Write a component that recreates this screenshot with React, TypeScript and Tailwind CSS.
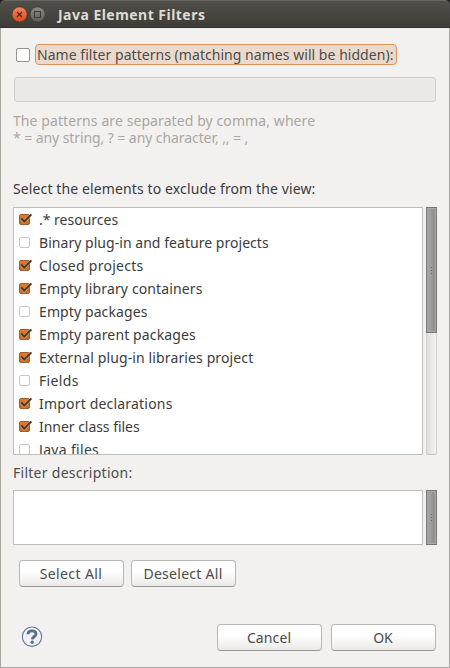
import type { ReactNode } from "react";

type Filter = { name: string; checked: boolean; tracking: string };

const filters: Filter[] = [
  { name: ".* resources", checked: true, tracking: "tracking-[0px]" },
  { name: "Binary plug-in and feature projects", checked: false, tracking: "tracking-[0.04px]" },
  { name: "Closed projects", checked: true, tracking: "tracking-[0.28px]" },
  { name: "Empty library containers", checked: true, tracking: "tracking-[0.13px]" },
  { name: "Empty packages", checked: false, tracking: "tracking-[0.1px]" },
  { name: "Empty parent packages", checked: true, tracking: "tracking-[0.12px]" },
  { name: "External plug-in libraries project", checked: true, tracking: "tracking-[0.12px]" },
  { name: "Fields", checked: false, tracking: "tracking-[0.35px]" },
  { name: "Import declarations", checked: true, tracking: "tracking-[0.19px]" },
  { name: "Inner class files", checked: true, tracking: "tracking-[-0.04px]" },
  { name: "Java files", checked: false, tracking: "tracking-[0.32px]" },
];

function CheckMark({ checked }: { checked: boolean }) {
  return (
    <svg className="h-[13px] w-[14px] shrink-0" viewBox="0 0 14 13">
      <defs>
        <linearGradient id="tick-fill" x1="0" y1="0" x2="0" y2="1">
          <stop offset="0" stopColor="#e4792a" />
          <stop offset="1" stopColor="#cc6a22" />
        </linearGradient>
      </defs>
      {checked ? (
        <>
          <rect x="0.5" y="1.5" width="10" height="10" rx="1.5" fill="url(#tick-fill)" stroke="#a35b2b" />
          <path d="M2.3 5.8 L5.2 9 L12 1.8" fill="none" stroke="#e9b083" strokeWidth="3" opacity="0.6" />
          <path d="M2.3 5.3 L5.2 8.6 L12.4 1.4" fill="none" stroke="#3c3b37" strokeWidth="1.9" />
        </>
      ) : (
        <rect x="0.5" y="1.5" width="10" height="10" rx="1.5" fill="#fff" stroke="#c9c6c3" />
      )}
    </svg>
  );
}

function Thumb({ height }: { height: string }) {
  return (
    <div className={`flex w-full items-center justify-center border border-[#777] bg-linear-to-r from-[#a0a0a0] from-45% to-[#939393] to-55% shadow-[inset_0_0_0_1px_#a8a8a8] ${height}`}>
      <div className="flex flex-col gap-[2px]">
        <i className="size-px bg-[#666]" />
        <i className="size-px bg-[#666]" />
        <i className="size-px bg-[#666]" />
      </div>
    </div>
  );
}

function Button({ children, tracking }: { children: ReactNode; tracking: string }) {
  return (
    <button className={`h-[27px] w-[105px] rounded-[4px] border border-[#b9b6b2] border-b-[#999692] bg-linear-to-b from-white from-40% to-[#ebe9e8] pr-px text-center leading-[25px] text-[#4c4c4c] ${tracking}`}>
      {children}
    </button>
  );
}

export default function App() {
  return (
    <div className="flex h-[668px] w-[450px] flex-col overflow-hidden bg-[#1f1e1b] font-['Noto_Sans',sans-serif] text-[14px] text-[#3c3c3c]">
      <header className="flex h-7 shrink-0 items-center rounded-t-[5px] border-t border-b border-t-[#67665f] border-b-[#302f2b] bg-linear-to-b from-[#504f48] to-[#3d3c37] pl-3">
        <svg className="h-4 w-[34px] shrink-0" viewBox="0 0 34 16">
          <defs>
            <linearGradient id="close" x1="0" y1="0" x2="0" y2="1">
              <stop offset="0" stopColor="#f58560" />
              <stop offset="1" stopColor="#df4a16" />
            </linearGradient>
            <linearGradient id="max" x1="0" y1="0" x2="0" y2="1">
              <stop offset="0" stopColor="#8c8a81" />
              <stop offset="1" stopColor="#605f57" />
            </linearGradient>
          </defs>
          <circle cx="7.6" cy="8.4" r="7.5" fill="url(#close)" stroke="#35342f" strokeWidth="0.5" />
          <path d="M5 6 l5 5 M10 6 l-5 5" stroke="#512415" strokeWidth="1.2" />
          <circle cx="25.6" cy="8.4" r="7.5" fill="url(#max)" stroke="#35342f" strokeWidth="0.5" />
          <rect x="22.5" y="5.5" width="6" height="6" fill="none" stroke="#3c3b36" />
        </svg>
        <h1 className="ml-3 whitespace-nowrap text-[14px] font-bold tracking-[0.47px] text-[#dfdbd2]">Java Element Filters</h1>
      </header>

      <main className="flex min-h-0 flex-1 flex-col border-r border-b border-l border-[#aaa8a1] bg-[#f2f1f0] pr-3 pl-3 whitespace-nowrap">
        <div className="mt-4 flex h-[21px] items-center">
          <span className="ml-[3px] size-[14px] rounded-[2px] border border-[#96928d] bg-white" />
          <span className="ml-[5px] h-[21px] w-[362px] rounded-[4px] border border-[#dc935a] bg-[#ebdacb] pl-px leading-[19px] tracking-[0.04px] text-[#4c4c4c]">
            Name filter patterns (matching names will be hidden):
          </span>
        </div>
        <div className="mt-3 ml-px h-[25px] w-[422px] rounded-[3px] border border-[#cfcdcb] bg-[#eae9e8]" />
        <div className="mt-[10px] leading-[17px] text-[#aaa6a2]">
          <p className="tracking-[0.09px]">The patterns are separated by comma, where</p>
          <p className="tracking-[-0.08px]">* = any string, ? = any character, ,, = ,</p>
        </div>
        <p className="mt-[34px] h-[18px] leading-[18px] tracking-[0.12px]">Select the elements to exclude from the view:</p>

        <div className="mt-[9px] flex h-[248px] shrink-0 gap-[3px]">
          <ul className="h-full w-[410px] overflow-hidden border border-[#bfbcb9] bg-white pl-[5px]">
            {filters.map((f) => (
              <li key={f.name} className="flex h-[23px] items-center gap-[6px]">
                <CheckMark checked={f.checked} />
                <span className={f.tracking}>{f.name}</span>
              </li>
            ))}
          </ul>
          <div className="h-full w-[11px] rounded-b-[2px] border-b border-[#c4c1be] bg-linear-to-r from-[#dddbd9] to-[#f6f5f4] shadow-[inset_-1px_0_0_#d2d0ce,inset_1px_0_0_#d2d0ce]">
            <Thumb height="h-[126px]" />
          </div>
        </div>

        <p className="mt-[9px] h-[18px] leading-[18px] tracking-[0.27px] text-[#4c4c4c]">Filter description:</p>
        <div className="mt-2 flex h-[55px] shrink-0 gap-[3px]">
          <div className="w-[410px] border border-[#bfbcb9] bg-white" />
          <div className="w-[11px]">
            <Thumb height="h-full" />
          </div>
        </div>

        <div className="mt-[15px] ml-[6px] flex gap-[7px]">
          <Button tracking="tracking-[0.38px]">Select All</Button>
          <Button tracking="tracking-[0.28px]">Deselect All</Button>
        </div>

        <footer className="mt-[37px] flex items-center">
          <svg className="mb-[2px] ml-[8px] h-[22px] w-[22px]" viewBox="0 0 22 22">
            <circle cx="11" cy="10.7" r="9.7" fill="#eff1f4" stroke="#6478a0" strokeWidth="1.1" />
            <path d="M6.9 8.2 C7 5.8 8.6 4.8 11 4.8 C13.6 4.8 15 6 15 8 C15 10.6 11.5 10.4 11.3 13.4" fill="none" stroke="#5a6d8e" strokeWidth="2.8" />
            <circle cx="11.2" cy="16.3" r="1.7" fill="#5a6d8e" />
          </svg>
          <div className="ml-auto flex gap-[9px] pr-px">
            <Button tracking="tracking-[0.1px]">Cancel</Button>
            <Button tracking="tracking-[0px]">OK</Button>
          </div>
        </footer>
      </main>
    </div>
  );
}
